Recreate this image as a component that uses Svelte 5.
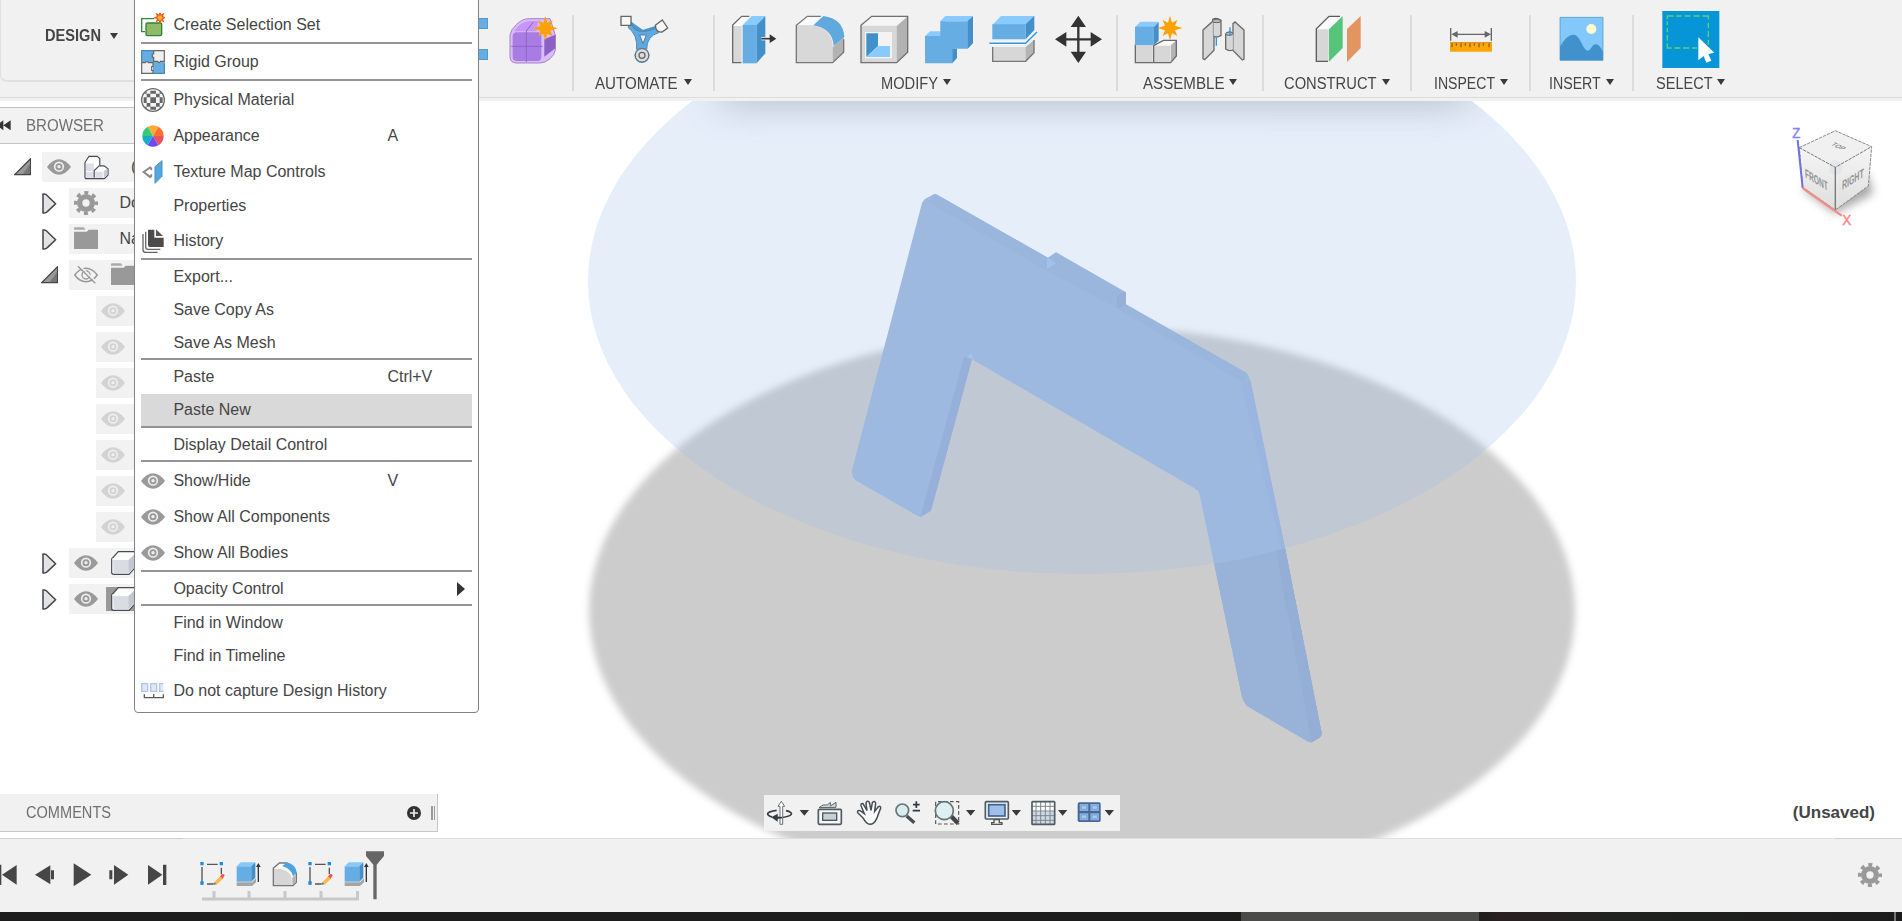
<script>
  const gear = '<g fill="none" stroke="#999"><circle cx="36" cy="36" r="19" stroke-width="16"/><circle cx="36" cy="36" r="31" stroke-width="10" stroke-dasharray="12.17" stroke-dashoffset="6.1"/></g>';
  const eye = '<path d="M0 36Q17 13 36 13T72 36Q55 59 36 59T0 36Z" fill="#9a9a9a"/><circle cx="36" cy="35" r="13" fill="none" stroke="#eee" stroke-width="5"/><circle cx="36" cy="35" r="5" fill="#eee"/>';
  const folder = '<path d="M0 66V14H38L44 8H73V66Z" fill="#999"/><path d="M0 8V3Q0 1 4 1H27Q32 1 34 8Z" fill="#aaa"/>';
  const cube = '<path d="M2 24L22 2H76V46L54 70H8Q2 70 2 64Z" fill="#fcfcfd" stroke="#444b52" stroke-width="3.5"/><path d="M6 26H52V66H8Z" fill="#dadce3"/><path d="M52 26L74 5V44L52 66Z" fill="#c3c7d2"/><path d="M4 24H52L74 4" fill="none" stroke="#fff" stroke-width="4"/>';
  const star = (x, y, s) => `<path transform="translate(${x} ${y}) scale(${s})" fill="#fca103" d="M0-37L6-16L22-24L15-7L37 0L15 7L22 24L6 16L0 37L-6 16L-22 24L-15 7L-37 0L-15-7L-22-24L-6-16Z"/>`;

  const menuIcons = {
    set: '<path d="M40 17H2V56H12" fill="none" stroke="#2f8a35" stroke-width="4"/><rect x="15" y="30" width="47" height="38" rx="4" fill="#8fba68" stroke="#2f8535" stroke-width="4"/><path transform="translate(57 14)" d="M0-15L3-7L10-11L7-3L15 0L7 3L10 11L3 7L0 15L-3 7L-10 11L-7 3L-15 0L-7-3L-10-11L-3-7Z" fill="#ffb733" stroke="#ee5a1c" stroke-width="3.5"/>',
    rigid: '<path d="M0 0H39V37H0ZM36 36H72V72H36Z" fill="#65ade3"/><path d="M38 2H70V34H58Q55 42 50 34H38V22H34V12H38Z" fill="#efefef" stroke="#666" stroke-width="3.5"/><path d="M2 38H13Q17 31 22 38H36V50H32V61H36V70H2Z" fill="#efefef" stroke="#666" stroke-width="3.5"/><path d="M2 36V2H36M70 40V70H38" fill="none" stroke="#467fa7" stroke-width="3"/>',
    material: '<circle cx="36" cy="36" r="34" fill="#f5f5f5" stroke="#686868" stroke-width="4"/><g fill="#666"><path d="M28 28h17v17H28zM17 17h11v11H17zM45 17h11v11H45zM17 45h11v11H17zM45 45h11v11H45zM28 8h17v9H28zM28 56h17v9H28zM8 28h9v17H8zM56 28h9v17h-9zM10 17L17 10V17zM56 10L63 17H56zM10 56H17V63zM56 56H63L56 63z"/></g>',
    appearance: '<path d="M36 36L20 8A32 32 0 0 1 52 8Z" fill="#ffad32"/><path d="M36 36L52 8A32 32 0 0 1 68 36Z" fill="#ff7033"/><path d="M36 36H68A32 32 0 0 1 52 64Z" fill="#e9535a"/><path d="M36 36L52 64A32 32 0 0 1 20 64Z" fill="#7148f1"/><path d="M36 36L20 64A32 32 0 0 1 4 36Z" fill="#18acc9"/><path d="M36 36H4A32 32 0 0 1 20 8Z" fill="#38c978"/>',
    texture: '<path d="M29 21L8 36L29 52M26 21q7 4 4 9M26 52q7-3 4-9" fill="none" stroke="#888" stroke-width="6"/><path d="M42 20L63 2V49L42 70Z" fill="#57a7df" stroke="#438fc9" stroke-width="3"/>',
    history: '<path d="M21 2H40V26H68V54H27Q21 54 21 48Z" fill="#4b4b4b"/><path d="M45 1L66 21H45Z" fill="#555"/><path d="M14 8V54Q14 61 22 61H58M6 15V62Q6 70 14 70H50" fill="none" stroke="#666" stroke-width="4"/>',
    eye,
    nohist: '<g fill="#dfe8fa" stroke="#b4c4e4" stroke-width="4"><path d="M2 14H20V37H2ZM29 14H47V37H29ZM67 14H56V37H67"/></g><path d="M10 46V56H67V46M38 45V56" fill="none" stroke="#5a5a5a" stroke-width="4"/>'
  };

  const menu = [
    { t: 'Create Selection Set', i: 'set' }, null,
    { t: 'Rigid Group', i: 'rigid' }, null,
    { t: 'Physical Material', i: 'material' },
    { t: 'Appearance', i: 'appearance', k: 'A' },
    { t: 'Texture Map Controls', i: 'texture' },
    { t: 'Properties' },
    { t: 'History', i: 'history' }, null,
    { t: 'Export...' }, { t: 'Save Copy As' }, { t: 'Save As Mesh' }, null,
    { t: 'Paste', k: 'Ctrl+V' }, { t: 'Paste New', hover: true }, null,
    { t: 'Display Detail Control' }, null,
    { t: 'Show/Hide', i: 'eye', k: 'V' },
    { t: 'Show All Components', i: 'eye' },
    { t: 'Show All Bodies', i: 'eye' }, null,
    { t: 'Opacity Control', sub: true }, null,
    { t: 'Find in Window' }, { t: 'Find in Timeline' },
    { t: 'Do not capture Design History', i: 'nohist' }
  ];

  const form = { x: 93, d: '<path d="M120 106Q121 90 140 73Q156 56 178 56H240L256 105V150Q254 164 240 176Q226 189 210 189H137Q120 187 120 170Z" fill="#d9bcf9" stroke="#a583c4" stroke-width="3"/><path d="M132 94Q150 66 178 63H205L200 94Z" fill="#c794fb"/><rect x="128" y="97" width="86" height="86" rx="12" fill="#a97ce4"/><path d="M223 118L256 104V145L223 170Z" fill="#8a60c4"/><path d="M124 139H218M169 93V186M169 93L190 66" fill="none" stroke="#8f64c6" stroke-width="3"/>' + star(226, 85, 1) };

  const groups = [
    { label: 'AUTOMATE', w: 84, natural: 88.9, width: 141, icons: [
      { x: 425, d: '<path d="M476 68L519 98L560 85M519 98L517 155" stroke="#5196cb" stroke-width="15" fill="none"/><path d="M487 68Q490 94 519 94T560 82L568 98Q532 108 532 148H502Q506 105 476 82Z" fill="#60a9df" stroke="#4487b8" stroke-width="3"/><path d="M511 105H531L521 131Z" fill="#f1f1f1" stroke="#487da5" stroke-width="3"/><path d="M455 49H485V76H455Z" fill="#f7f7f7" stroke="#666" stroke-width="4"/><path d="M558 76L579 60L595 84L578 96Q559 99 558 76Z" fill="#f7f7f7" stroke="#666" stroke-width="4"/><circle cx="518" cy="166" r="23" fill="#4d9ad1"/><circle cx="518" cy="166" r="20" fill="#ddd" stroke="#666" stroke-width="3"/><circle cx="518" cy="166" r="9" fill="none" stroke="#666" stroke-width="4"/>' }] },
    { label: 'MODIFY', w: 57, natural: 62.2, width: 403, icons: [
      { x: 757, d: '<path d="M792 76L819 49H846L819 74V188H792Z" fill="#fafafa"/><path d="M792 78H819V188H792Z" fill="#d8d8d8"/><path d="M818 188H792V75L819 49H842" fill="none" stroke="#6b6b6b" stroke-width="4"/><path d="M822 76L849 48H890L864 76Z" fill="#8acbff"/><path d="M822 75H864V190H822Z" fill="#65ade3"/><path d="M864 75L890 48V160L864 190Z" fill="#438fc9"/><path d="M878 116H908" stroke="#fff" stroke-width="10"/><path d="M878 116H908" stroke="#333" stroke-width="5"/><path d="M903 103L923 116L903 129Z" fill="#333"/>' },
      { x: 950, d: '<path d="M981 75L1014 49H1060L1034 75Z" fill="#fafafa"/><path d="M981 76H1030Q1088 86 1090 138V188H981Z" fill="#d8d8d8"/><path d="M1090 142L1123 112V157L1090 188Z" fill="#b2b2b2"/><path d="M1054 49H1014L981 76V188H1090L1123 157V118" fill="none" stroke="#777" stroke-width="4"/><path d="M1032 76L1062 48Q1122 56 1125 111L1093 138Q1090 86 1032 76Z" fill="#60a9df"/>' },
      { x: 1145, d: '<path d="M1175 76L1207 49H1315V157L1282 188H1175Z" fill="#f5f5f5"/><path d="M1175 77H1282V188H1175Z" fill="#d7d7d7"/><path d="M1282 78L1315 49V157L1282 188Z" fill="#b2b2b2"/><path d="M1175 76L1207 49H1315V157L1282 188H1175Z" fill="none" stroke="#707070" stroke-width="4"/><path d="M1187 96H1268V175H1187Z" fill="#f3f3f3"/><path d="M1191 100H1226V138L1191 171Z" fill="#438fc9"/><path d="M1226 138H1262V171H1191Z" fill="#8acbff"/>' },
      { x: 1340, d: '<path d="M1367 108L1382 94H1414V62L1428 48H1510L1495 63H1428V108Z" fill="#8acbff"/><path d="M1367 108H1413V64H1494V146H1450V190H1367Z" fill="#65ade3"/><path d="M1494 64L1511 48V130L1495 146H1463V174L1449 190V146H1494Z" fill="#438fc9"/>' },
      { x: 1535, d: '<path d="M1569 75L1595 48H1695L1669 75Z" fill="#8acbff"/><path d="M1569 73H1669V118H1569Z" fill="#65ade3"/><path d="M1669 73L1695 47V90L1669 118Z" fill="#438fc9"/><path d="M1560 130H1669L1703 96" stroke="#fff" stroke-width="10" fill="none"/><path d="M1560 130H1669L1703 96" stroke="#2897e9" stroke-width="4.5" fill="none"/><path d="M1570 141H1669L1694 120V158L1669 184H1570Z" fill="#d7d7d7"/><path d="M1669 141L1694 120V158L1669 184Z" fill="#b5b5b5"/><path d="M1570 141V184H1669L1694 158V120" fill="none" stroke="#777" stroke-width="4"/>' },
      { x: 1728, d: '<path d="M1825 65V172M1772 118H1880" stroke="#333" stroke-width="7"/><path d="M1825 47L1848 81H1802ZM1825 189L1848 155H1802ZM1755 118L1789 96V140ZM1896 118L1862 96V140Z" fill="#333"/>' }] },
    { label: 'ASSEMBLE', w: 81.5, natural: 86.3, width: 146, icons: [
      { x: 557, d: '<path d="M588 135H645L672 121H711V168L694 188H588Z" fill="#fafafa"/><path d="M589 137H640V187H589ZM645 137H692V187H645Z" fill="#d7d7d7"/><path d="M694 136L711 121V168L694 187Z" fill="#b5b5b5"/><path d="M588 133V188H694L711 168V121H672L643 137V188" fill="none" stroke="#6b6b6b" stroke-width="4"/><path d="M587 82L603 65H658L643 82Z" fill="#8acbff"/><path d="M587 80H643V136H587Z" fill="#65ade3"/><path d="M643 82L658 66V122L643 136Z" fill="#438fc9"/>' + star(692, 84, 1) },
      { x: 752, d: '<g fill="#d7d7d7" stroke="#6b6b6b" stroke-width="4"><path d="M791 90L820 64V58Q832 52 845 61V106Q833 114 824 109V151L796 179L791 176Z"/><path d="M914 90L887 66L881 71V99Q870 93 859 101V147Q869 155 880 150L909 180L914 177Z"/></g><path d="M822 65V109M882 99V150" stroke="#999" stroke-width="3"/><ellipse cx="832" cy="63" rx="13" ry="5" fill="#b8b8b8" stroke="#666" stroke-width="3"/><ellipse cx="870" cy="101" rx="11" ry="5" fill="#b8b8b8" stroke="#666" stroke-width="3"/><path d="M831 113V137M872 82V108" stroke="#2897e9" stroke-width="4"/>' }] },
    { label: 'CONSTRUCT', w: 92.5, natural: 100.4, width: 148, icons: [
      { x: 1095, d: '<path d="M1129 86L1167 49H1208L1167 88V184H1129Z" fill="#fafafa"/><path d="M1129 88H1166V184H1129Z" fill="#d7d7d7"/><path d="M1164 184H1129V86L1167 49H1200" fill="none" stroke="#5c5c5c" stroke-width="4"/><path d="M1167 88L1208 48V144L1167 185Z" fill="#57c47c"/><path d="M1221 87L1262 48V144L1221 186Z" fill="#e29561"/>' }] },
    { label: 'INSPECT', w: 61, natural: 69.3, width: 119, icons: [
      { x: 56, d: '<path d="M94 84V122M216 84V122M104 103H207" stroke="#666" stroke-width="4"/><path d="M96 103L115 93V113ZM215 103L196 93V113Z" fill="#666"/><path d="M92 127H218V155H92Z" fill="#ffa50a"/><path d="M98 130V142M111 130V137M125 130V142M138 130V137M152 130V142M165 130V137M179 130V142M192 130V137M209 130V142" stroke="#815b19" stroke-width="3.5"/><path d="M92 128H218" stroke="#c27f0e" stroke-width="2"/>' }] },
    { label: 'INSERT', w: 52, natural: 58.7, width: 103, icons: [
      { x: 388, d: '<path d="M421 52H550V181H421Z" fill="#82c8fa" stroke="#438fc9" stroke-width="2"/><circle cx="515" cy="87" r="15" fill="#fffccd"/><path d="M421 140Q445 98 466 105C485 113 490 152 505 152C514 152 517 132 529 133Q540 134 550 156V181H421Z" fill="#4091cc"/>' }] },
    { label: 'SELECT', w: 56.5, natural: 62.2, width: 115, icons: [
      { x: 713, d: '<path d="M726 33H897V204H726Z" fill="#0696d7"/><path d="M741 58V48H760M767 48H784M793 48H811M820 48H838M846 48H864V58M864 69V85M864 93V111M864 119V134M830 144H815M807 144H788M780 144H762M754 144H741V130M741 122V105M741 97V83M741 75V64" stroke="#5bd076" stroke-width="4" fill="none"/><path d="M834 112V181L850 168L858 188L873 182L864 162L882 158Z" fill="#fff"/>' }] }
  ];

  const tree = [
    { indent: 42, arrow: 'open', eye: 1, comp: true, text: '(' },
    { indent: 69, arrow: 'closed', gear: true, text: 'Do' },
    { indent: 69, arrow: 'closed', folder: true, text: 'Na' },
    { indent: 69, arrow: 'open', hidden: true, folder2: true },
    ...Array.from({ length: 7 }, () => ({ indent: 96, eye: 0.35 })),
    { indent: 69, arrow: 'closed', eye: 1, cube: true },
    { indent: 69, arrow: 'closed', eye: 1, cube: true, active: true }
  ];
  const compIcon = '<path d="M3 22L15 3H40L48 10V32H61L73 41V60L62 71H5L3 68Z" fill="#fff" stroke="#454b52" stroke-width="3.5"/><path d="M6 25H30V48H6ZM6 50H30V68H6ZM34 50H57V68H34Z" fill="#dedfe6"/><path d="M31 68V46L46 32" stroke="#454b52" stroke-width="3.5" fill="none"/><path d="M60 48L71 40V60L60 68Z" fill="#c8cbd4"/>';

  const drop = (x) => `<path d="M${x - 14} 90H${x + 14}L${x} 107Z" fill="#3a3a3a"/>`;
  const navIcons = [
    { x: 72, w: 148, d: '<path d="M110 91C75 96 78 105 96 111M138 92C164 97 160 110 120 113H104" fill="none" stroke="#333b40" stroke-width="5"/><path d="M120 79H114L124 64L134 79H128V133H120Z" fill="#fff" stroke="#666e73" stroke-width="3"/><path d="M104 113H126" stroke="#333b40" stroke-width="5"/><path d="M94 112L113 101V125Z" fill="#333b40"/>' + drop(193) },
    { x: 220, w: 108, d: '<rect x="236" y="88" width="69" height="45" rx="3" fill="#f5f7f8" stroke="#505a61" stroke-width="5"/><rect x="249" y="99" width="42" height="22" fill="#c7d0d3" stroke="#4b565e" stroke-width="4"/><path d="M238 83L250 75H263L272 67V78L289 67V82Z" fill="#d4dbde" stroke="#59636a" stroke-width="3"/>' },
    { x: 328, w: 120, d: '<path d="M371 115L354 98Q352 90 361 92L374 101L364 77Q363 69 370 71L382 92L379 69Q382 60 389 67L394 91L398 68Q404 61 408 69L405 94L415 81Q423 76 423 84L411 116Q403 133 391 133Q380 132 371 115Z" fill="#fbfcfc" stroke="#454e54" stroke-width="4.5"/>' },
    { x: 448, w: 120, d: '<path d="M501 108L524 128" stroke="#454e54" stroke-width="10"/><circle cx="488" cy="91" r="19" fill="#d9edef" stroke="#68747a" stroke-width="5"/><path d="M520 74H540M530 64V84M519 92H541" stroke="#333b40" stroke-width="5"/>' },
    { x: 568, w: 152, d: '<path d="M588 76V65H657V132H588Z" fill="none" stroke="#555" stroke-width="3.5" stroke-dasharray="11 7"/><path d="M633 107L655 130" stroke="#454545" stroke-width="13"/><circle cx="614" cy="92" r="27" fill="#def0f1" stroke="#667378" stroke-width="5"/>' + drop(693) },
    { x: 720, w: 138, d: '<rect x="736" y="65" width="69" height="52" rx="3" fill="#f1f4f6" stroke="#505a61" stroke-width="5"/><rect x="746" y="74" width="49" height="34" fill="#9dbfe9" stroke="#416391" stroke-width="5"/><path d="M762 119H778V128H786V133H755V128H762Z" fill="#eee" stroke="#555" stroke-width="4"/>' + drop(829) },
    { x: 858, w: 138, d: '<path d="M876 65H944V133H876Z" fill="#fff"/><path d="M876 94H944V133H876Z" fill="#ccd8e4"/><path d="M888 65V133M902 65V133M916 65V133M930 65V133M876 79H944M876 93H944M876 107H944M876 121H944" stroke="#7d868d" stroke-width="3"/><rect x="876" y="65" width="68" height="68" rx="2" fill="none" stroke="#505a61" stroke-width="5"/>' + drop(968) },
    { x: 996, w: 144, d: '<rect x="1013" y="67" width="69" height="59" rx="5" fill="#456897"/><path d="M1019 72H1045V93H1019ZM1051 72H1077V93H1051ZM1019 100H1045V121H1019ZM1051 100H1077V121H1051Z" fill="#8bb0df"/><path d="M1024 77H1040V88H1024ZM1056 77H1072V88H1056ZM1024 105H1040V116H1024ZM1056 105H1072V116H1056Z" fill="#a7c9ef" stroke="#6f98cc" stroke-width="2"/>' + drop(1108) }
  ];

  const playIcons = [
    { x: 0, w: 78, d: '<path d="M6 946L50 917V976ZM0 916H4V977H0Z"/>' },
    { x: 78, w: 110, d: '<path d="M105 946L151 918V975ZM153 933H162V960H153Z"/>' },
    { x: 188, w: 112, d: '<path d="M220 912V981L273 946Z"/>' },
    { x: 300, w: 112, d: '<path d="M328 933H337V960H328ZM342 917V976L385 946Z"/>' },
    { x: 412, w: 174, d: '<path d="M445 917V976L488 946ZM490 916H500V977H490Z"/>' }
  ];
  const sketch = '<path d="M15 30V84M30 22H62M73 32V52M30 81H48" stroke="#555" stroke-width="4" fill="none"/><path d="M10 15H20V25H10ZM68 15H78V25H68ZM10 73H20V83H10Z" fill="#1e8be8"/><path d="M52 76L70 58L78 65L60 82Z" fill="#ffb942"/><path d="M69 58L76 51Q81 50 83 55L77 65Z" fill="#f4505f"/><path d="M45 84L52 76L60 82Z" fill="#777"/>';
  const extrude = '<path d="M11 76H57L69 64V76L57 87H11Z" fill="#a5a5a5"/><path d="M11 28L23 16H66L55 28Z" fill="#86c8fb"/><path d="M11 28H55V74H11Z" fill="#65ade3"/><path d="M55 28L67 16V62L55 74Z" fill="#438fc9"/><path d="M76 26V75" stroke="#333" stroke-width="4"/><path d="M69 30L76 18L83 30Z" fill="#333"/>';
  const fillet = '<path d="M13 34L31 18H53L78 42L82 50V76L72 86H13Z" fill="#f8f8f8" stroke="#777" stroke-width="4"/><path d="M15 36H36Q66 44 68 66V84H15Z" fill="#d6d6d6"/><path d="M70 62L80 52V76L70 84Z" fill="#b2b2b2"/><path d="M40 27L54 16Q80 22 83 47L72 58Q68 36 40 27Z" fill="#4da2df"/>';
  const features = [sketch, extrude, fillet, sketch, extrude];
  const tickPath = (i) => (i === 0 ? 'M7 9H36M19 1V9' : i === features.length - 1 ? 'M0 9H20M18.5 1V9' : 'M0 9H36M18 1V9');
</script>

{#snippet icon(d, box, w, h)}
  <svg viewBox={box} width={w} height={h} aria-hidden="true">{@html d}</svg>
{/snippet}

{#snippet label(text, w, natural)}
  <span class="fit" style="width:{w}px"><span style="transform:scaleX({w / natural})">{text}</span></span>
{/snippet}

<div class="app">
  <header class="toolbar">
    <div class="workspace">
      {@render label('DESIGN', 56, 61.3)}<i class="caret"></i>
    </div>
    <div class="create">
      <div class="pattern"><b></b><b></b></div>
      {@render icon(form.d, `${form.x} 0 195 210`, 65, 70)}
    </div>
    {#each groups as g}
      <div class="group" style="width:{g.width}px">
        <div class="tools">
          {#each g.icons as ic}{@render icon(ic.d, `${ic.x} 0 195 210`, 65, 70)}{/each}
        </div>
        <div class="caption">{@render label(g.label, g.w, g.natural)}<i class="caret"></i></div>
      </div>
    {/each}
  </header>

  <main class="canvas">
    <svg class="scene" viewBox="0 101 1902 737" width="1902" height="737">
      <defs>
        <filter id="soft" x="-5%" y="-5%" width="110%" height="110%"><feGaussianBlur stdDeviation="3.5" /></filter>
        <filter id="shade" x="-20%" y="-150%" width="140%" height="400%"><feGaussianBlur stdDeviation="22 16" /></filter>
        <filter id="cubeblur" x="-50%" y="-50%" width="200%" height="200%"><feGaussianBlur stdDeviation="14" /></filter>
        <linearGradient id="face" x1="0" y1="0" x2="0" y2="1"><stop offset="0" stop-color="#f5f5f5" /><stop offset="1" stop-color="#dedede" /></linearGradient>
        <clipPath id="disc"><ellipse cx="1082" cy="281" rx="494" ry="293" /></clipPath>
        <clipPath id="part"><path d="M936 194L1048 257.7L1056 252.3L1125.8 292.3V304.3L1245 372Q1249 375 1251 383L1285 548L1321.7 733Q1322 736 1319 738L1312 742Q1310 743 1307 741L1247 706Q1244 703 1242 697L1199.5 494Q1198 490 1194 488L972 359.3L931.5 509Q931 511 929 512L921 516.5Q919 517 916 515L856 480.5Q851 476 852 470L922 203Q923 201 925 199L934 194Z" /></clipPath>
      </defs>
      <ellipse cx="1082" cy="611" rx="493" ry="285" fill="#ccc" filter="url(#soft)" />
      <ellipse cx="1082" cy="281" rx="494" ry="293" fill="rgb(160,190,235)" fill-opacity=".26" />
      <g clip-path="url(#disc)"><rect x="722" y="56" width="746" height="54" fill="#8a959f" opacity=".42" filter="url(#shade)" /></g>
      <g clip-path="url(#part)">
        <rect x="840" y="180" width="500" height="580" fill="#9db9e0" />
        <path d="M936 194L1048 257.7L1056 252.3L1126 292.3V304L1249 374L1244 383L1118 309L1042 268L928 202Z" fill="#9bb6dd" />
        <path d="M1117 296L1126 291V304L1117 309Z" fill="#97afd6" />
        <path d="M972 359L964 357L920 518H932Z" fill="#97b0da" />
        <path d="M1251 380L1242 386L1284 560L1310 746L1325 738Z" fill="#9ab5df" />
        <path d="M1212 564Q1250 559 1288 547L1330 750H1240Z" fill="#99b2d8" />
        <path d="M1276 551L1286 548L1323 738L1312 744Z" fill="#95aed5" />
        <path d="M1047 258L1056 263L1047 269Z" fill="#a0c2f0" />
        <path d="M967 357L971 353L974 360Z" fill="#a0c2f0" />
      </g>
      <g class="viewcube" transform="translate(1420 0) scale(.33333)">
        <path d="M1145 565L1245 640L1360 580L1340 520Z" fill="#777" opacity=".65" filter="url(#cubeblur)" />
        <path d="M1138 443L1246 392L1355 440L1246 502Z" fill="#f0f0f0" />
        <path d="M1138 443L1246 502V630L1148 562Z" fill="url(#face)" />
        <path d="M1355 440L1246 502V630L1345 558Z" fill="url(#face)" />
        <path d="M1228 488L1246 479L1265 489V515L1246 526L1228 516Z" fill="#dfe1e6" opacity=".7" />
        <path d="M1138 443L1246 392L1355 440L1345 558L1246 630L1148 562Z" fill="none" stroke="#888" stroke-width="3" stroke-dasharray="10 3" />
        <path d="M1138 443L1246 502L1355 440" fill="none" stroke="#777" stroke-width="3" stroke-dasharray="10 3" /><path d="M1246 502V630" stroke="#777" stroke-width="4" />
        <path d="M1133 420L1148 564" stroke="#6f70e8" stroke-width="6" />
        <path d="M1148 564L1265 647" stroke="#f58b8b" stroke-width="7" />
        <g fill="#8f9296" font-size="36" font-weight="bold">
          <text transform="matrix(.55 .33 .06 1.05 1156 532)">FRONT</text>
          <text transform="matrix(.58 -.35 -.02 1.05 1266 570)">RIGHT</text>
          <text transform="matrix(.56 .28 -.65 .36 1231 434)" font-size="31">TOP</text>
        </g>
        <text x="1117" y="413" fill="#8584f8" stroke="#8584f8" stroke-width="1.5" font-size="44" textLength="24" lengthAdjust="spacingAndGlyphs">Z</text>
        <text x="1267" y="675" fill="#fb8989" stroke="#fb8989" stroke-width="1.5" font-size="44" textLength="27" lengthAdjust="spacingAndGlyphs">X</text>
      </g>
    </svg>

    <aside class="browser">
      <div class="browser-head">
        {@render icon('<path d="M-10 379L10 364V394ZM10 379L32 364V394Z" fill="#333"/>', '0 360 36 38', 12, 12.7)}
        {@render label('BROWSER', 78, 82.7)}
      </div>
      {#each tree as n}
        <div class="node">
          <div class="twist" style="width:{n.indent}px">
            {#if n.arrow === 'open'}
              {@render icon('<path d="M2 50L50 2V50Z" fill="#999"/><path d="M25 50L50 15V50Z" fill="#777"/><path d="M2 50L50 2V50Z" fill="none" stroke="#444" stroke-width="4"/>', '0 0 52 54', 17.3, 18)}
            {:else if n.arrow}
              {@render icon('<path d="M3 3Q12 2 16 8L41 32L16 56Q12 61 3 60Z" fill="#e2e3e8" stroke="#444" stroke-width="4.5" stroke-linejoin="round"/>', '0 0 49 63', 16.3, 21)}
            {/if}
          </div>
          <div class="cell">
            {#if n.eye}<span class="ico" style="opacity:{n.eye}">{@render icon(eye, '0 0 72 72', 24, 24)}</span>{/if}
            {#if n.gear}<span class="ico">{@render icon(gear, '0 0 72 72', 24, 24)}</span>{/if}
            {#if n.folder}<span class="ico">{@render icon(folder, '0 0 72 72', 24, 24)}</span>{/if}
            {#if n.hidden}<span class="ico">{@render icon('<path d="M2 36Q18 16 36 16T70 36Q55 56 36 56T2 36ZM12 10L64 61" fill="none" stroke="#999" stroke-width="4.5"/><circle cx="36" cy="36" r="12" fill="none" stroke="#999" stroke-width="4"/><path d="M18 9L70 60" stroke="#f2f2f2" stroke-width="4"/>', '0 0 72 72', 24, 24)}</span>{/if}
            {#if n.comp}<span class="second">{@render icon(compIcon, '0 0 76 74', 25, 25)}</span>{/if}
            {#if n.folder2}<span class="second">{@render icon(folder, '0 0 72 72', 24, 24)}</span>{/if}
            {#if n.cube}<span class="second" class:active={n.active}>{@render icon(cube, '0 0 76 72', 25.3, 24)}</span>{/if}
            {#if n.text}<span class="name">{n.text}</span>{/if}
          </div>
        </div>
      {/each}
    </aside>

    <section class="comments">
      {@render label('COMMENTS', 85, 93.3)}
      <span class="add">{@render icon('<circle cx="21" cy="21" r="21" fill="#333"/><path d="M21 9V33M9 21H33" stroke="#eee" stroke-width="5"/>', '0 0 42 42', 14, 14)}</span>
      <i class="grip"></i>
    </section>

    <nav class="navbar">
      {#each navIcons as n}{@render icon(n.d, `${n.x} 45 ${n.w} 108`, n.w / 3, 36)}{/each}
    </nav>
    <div class="status">(Unsaved)</div>
  </main>

  <footer class="timeline">
    <div class="play">
      {#each playIcons as p}{@render icon(p.d, `${p.x} 836 ${p.w} 220`, p.w / 3, 73.3)}{/each}
    </div>
    <div class="track">
      {#each features as f, i}
        <div class="feature">
          {@render icon(f, '0 0 96 90', 32, 30)}
          <svg class="tick" viewBox="0 0 36 12" width="36" height="12"><path d={tickPath(i)} fill="none" stroke="#c8c8c8" stroke-width="3" /></svg>
        </div>
      {/each}
    </div>
    <svg class="marker" viewBox="1095 875 60 150" width="20" height="50"><path d="M1098 879H1152V893L1130 919V1023H1120V919L1098 893Z" fill="#666" /></svg>
    <div class="settings">{@render icon(gear, '0 0 72 72', 24, 24)}</div>
  </footer>
  <div class="taskbar"><i class="task"></i><i class="edge"></i></div>

  <div class="menu">
    {#each menu as m}
      {#if m}
        <div class="item" class:tall={m.i} class:hover={m.hover}>
          <span class="slot">{#if m.i}{@render icon(menuIcons[m.i], '0 0 72 72', 24, 24)}{/if}</span>
          <span class="text">{m.t}</span>
          <span class="key">{m.k ?? ''}</span>
          {#if m.sub}<i class="more"></i>{/if}
        </div>
      {:else}
        <div class="sep"></div>
      {/if}
    {/each}
  </div>
</div>

<style>
  :global(body) { background: #fff; overflow: hidden; }
  .app { position: relative; display: grid; grid-template-rows: 101px 737px 74px 9px; width: 1902px; height: 921px; overflow: hidden; font: 16px/20px "Liberation Sans", Arial, sans-serif; color: #454545; }
  .app :global(svg) { display: block; flex: none; }
  .fit { display: inline-block; white-space: nowrap; }
  .fit > span { display: inline-block; transform-origin: 0 50%; }
  .caret { flex: none; width: 0; height: 0; border: 4.5px solid transparent; border-top: 6px solid #3a3a3a; border-bottom: 0; }

  .toolbar { display: flex; background: #f1f1f1; box-shadow: inset 0 -3px #f1f1f1, inset 0 -4px #dcdcdc; }
  .workspace { box-sizing: border-box; display: flex; align-items: center; gap: 9px; width: 300px; height: 82px; padding: 0 0 8px 44px; border: 2px solid #e0e0e0; border-top: 0; border-left-width: 1px; border-radius: 0 0 7px 7px; font-weight: bold; }
  .create { display: flex; justify-content: flex-end; gap: 13px; width: 273px; box-sizing: border-box; padding-right: 7px; }
  .pattern { display: flex; flex-direction: column; gap: 20px; padding-top: 18px; }
  .pattern b { width: 29px; height: 11px; background: #65ade3; box-shadow: inset 0 0 0 1px #5299cd; }
  .group { position: relative; flex: none; display: flex; flex-direction: column; align-items: center; }
  .group::before { content: ""; position: absolute; left: -1px; top: 15px; width: 2px; height: 76px; background: #dcdcdc; }
  .tools { display: flex; }
  .caption { display: flex; align-items: center; gap: 5px; margin-top: 4px; height: 20px; }
  .caption .caret { margin-bottom: 4px; }

  .canvas { position: relative; overflow: hidden; }
  .scene { width: 1902px; height: 737px; font-family: "Liberation Sans", Arial, sans-serif; }
  .browser { position: absolute; left: 0; top: 6px; width: 300px; }
  .browser-head { box-sizing: border-box; display: flex; align-items: center; gap: 14px; height: 37px; margin-bottom: 5px; border: solid #c3c3c3; border-width: 1px 0; background: #f2f2f2; color: #707070; }
  .node { display: flex; align-items: center; height: 36px; }
  .twist { display: flex; justify-content: flex-end; box-sizing: border-box; padding-right: 11px; flex: none; }
  .cell { display: flex; align-items: center; flex: 1; height: 30px; background: #f2f2f2; white-space: nowrap; }
  .ico { margin-left: 4.5px; width: 24px; }
  .second { margin-left: 13.5px; }
  .active { box-shadow: -5px 0 #999; background: #999; }
  .name { margin-left: 22px; }

  .comments { position: absolute; left: 0; bottom: 6px; box-sizing: border-box; display: flex; align-items: center; width: 438px; height: 38px; padding-left: 26px; background: #f1f1f1; border: solid #c6c6c6; border-width: 0 1.5px 1.5px 0; color: #707070; }
  .add { margin-left: auto; }
  .grip { width: 1px; height: 14px; margin: 0 2px 0 10px; border: solid #999; border-width: 0 1px 0 2px; }
  .navbar { position: absolute; left: 764px; bottom: 7px; display: flex; width: 356px; height: 36px; background: #f1f1f1; }
  .status { position: absolute; right: 27px; bottom: 15px; font-weight: bold; font-size: 17px; }

  .timeline { position: relative; display: flex; background: #f1f1f1; box-shadow: inset 0 1px #dfdfdf; }
  .timeline::before, .timeline::after { content: ""; position: absolute; top: 0; left: 0; width: 183px; height: 1px; background: #cfcfcf; }
  .timeline::after { left: auto; right: 0; width: 67px; }
  .play { display: flex; fill: #464646; }
  .track { display: flex; padding-top: 19px; }
  .feature { width: 36px; height: 50px; display: flex; flex-direction: column; align-items: flex-start; gap: 3px; }
  .feature > :global(svg:first-child) { margin-left: 2px; }
  .marker { margin: 12px 0 0 -10px; }
  .settings { margin: 25px 20px 0 auto; }
  .taskbar { display: flex; background: linear-gradient(90deg, #1c1c1c 77%, #282020 79%, #20221f 85%, #1b1b1b); }
  .task { width: 238px; margin-left: 1241px; background: #4b4b49; }
  .edge { width: 2px; margin: 0 6px 0 auto; background: #777; }

  .menu { position: absolute; left: 134px; top: -4px; box-sizing: border-box; width: 345px; height: 717px; padding: 9.5px 6px 0 6.4px; border: 1.5px solid #828282; border-radius: 4px; background: #fff; }
  .item { display: flex; align-items: center; height: 33px; }
  .tall { height: 36px; }
  .hover { background: #d9d9d9; }
  .slot { width: 24px; margin-right: 8px; }
  .text { width: 214px; white-space: nowrap; }
  .key { width: 70px; }
  .more { border: 7px solid transparent; border-left: 8px solid #333; border-right: 0; }
  .sep { height: 2px; margin: -1px 0 0.5px; background: #949494; }
</style>
